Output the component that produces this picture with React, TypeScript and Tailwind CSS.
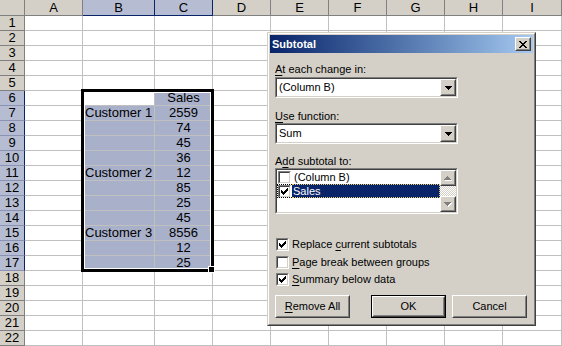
import React from 'react';

const COLS = [
  { k: 'A', w: 'w-[58px]' },
  { k: 'B', w: 'w-[72px]' },
  { k: 'C', w: 'w-[58px]' },
  { k: 'D', w: 'w-[58px]' },
  { k: 'E', w: 'w-[58px]' },
  { k: 'F', w: 'w-[58px]' },
  { k: 'G', w: 'w-[58px]' },
  { k: 'H', w: 'w-[58px]' },
  { k: 'I', w: 'flex-1 min-w-0' },
];

const DATA: Record<number, { B?: string; C?: string }> = {
  6: { C: 'Sales' },
  7: { B: 'Customer 1', C: '2559' },
  8: { C: '74' },
  9: { C: '45' },
  10: { C: '36' },
  11: { B: 'Customer 2', C: '12' },
  12: { C: '85' },
  13: { C: '25' },
  14: { C: '45' },
  15: { B: 'Customer 3', C: '8556' },
  16: { C: '12' },
  17: { C: '25' },
};

const ROWS = Array.from({ length: 22 }, (_, i) => i + 1);

function shaded(r: number, k: string) {
  return (k === 'B' && r >= 7 && r <= 17) || (k === 'C' && r >= 6 && r <= 17);
}

function Check() {
  const px: [number, number, number][] = [
    [6, 0, 1],
    [5, 1, 2],
    [0, 2, 1],
    [4, 2, 3],
    [0, 3, 2],
    [3, 3, 3],
    [0, 4, 5],
    [1, 5, 3],
    [2, 6, 1],
  ];
  return (
    <svg width="7" height="7" viewBox="0 0 7 7" shapeRendering="crispEdges">
      {px.map(([x, y, w], i) => (
        <rect key={i} x={x} y={y} width={w} height={1} fill="#000" />
      ))}
    </svg>
  );
}

function CheckBox({ checked }: { checked: boolean }) {
  return (
    <div className="w-[13px] h-[13px] shrink-0 border border-t-[#808080] border-l-[#808080] border-r-white border-b-white">
      <div className="w-full h-full border border-t-[#404040] border-l-[#404040] border-r-[#D4D0C8] border-b-[#D4D0C8] bg-white flex items-center justify-center">
        {checked ? <Check /> : null}
      </div>
    </div>
  );
}

function DownArrow({ color = '#000' }: { color?: string }) {
  return (
    <svg width="7" height="4" viewBox="0 0 7 4" shapeRendering="crispEdges">
      <rect x="0" y="0" width="7" height="1" fill={color} />
      <rect x="1" y="1" width="5" height="1" fill={color} />
      <rect x="2" y="2" width="3" height="1" fill={color} />
      <rect x="3" y="3" width="1" height="1" fill={color} />
    </svg>
  );
}

function DisabledArrow({ up }: { up: boolean }) {
  const rows = up
    ? [
        [3, 0, 1],
        [2, 1, 3],
        [1, 2, 5],
        [0, 3, 7],
      ]
    : [
        [0, 0, 7],
        [1, 1, 5],
        [2, 2, 3],
        [3, 3, 1],
      ];
  return (
    <svg width="8" height="5" viewBox="0 0 8 5" shapeRendering="crispEdges">
      {rows.map(([x, y, w], i) => (
        <rect key={'s' + i} x={x + 1} y={y + 1} width={w} height={1} fill="#fff" />
      ))}
      {rows.map(([x, y, w], i) => (
        <rect key={'g' + i} x={x} y={y} width={w} height={1} fill="#808080" />
      ))}
    </svg>
  );
}

function CloseGlyph() {
  const px: [number, number, number][] = [
    [0, 0, 2],
    [6, 0, 2],
    [1, 1, 2],
    [5, 1, 2],
    [2, 2, 4],
    [3, 3, 2],
    [2, 4, 4],
    [1, 5, 2],
    [5, 5, 2],
    [0, 6, 2],
    [6, 6, 2],
  ];
  return (
    <svg width="8" height="7" viewBox="0 0 8 7" shapeRendering="crispEdges">
      {px.map(([x, y, w], i) => (
        <rect key={i} x={x} y={y} width={w} height={1} fill="#000" />
      ))}
    </svg>
  );
}

function Raised({ className, children }: { className: string; children?: React.ReactNode }) {
  return (
    <div className={`shrink-0 border border-t-white border-l-white border-r-[#404040] border-b-[#404040] ${className}`}>
      <div className="w-full h-full border border-t-[#D4D0C8] border-l-[#D4D0C8] border-r-[#808080] border-b-[#808080] bg-[#D4D0C8] flex items-center justify-center">
        {children}
      </div>
    </div>
  );
}

function Combo({ value }: { value: string }) {
  return (
    <div className="w-[183px] h-[21px] border border-t-[#808080] border-l-[#808080] border-r-white border-b-white">
      <div className="w-full h-full border border-t-[#404040] border-l-[#404040] border-r-[#D4D0C8] border-b-[#D4D0C8] bg-white flex">
        <div className="flex-1 flex items-center pl-[2px] text-[11px] leading-[13px]">{value}</div>
        <Raised className="w-[16px] h-full">
          <DownArrow />
        </Raised>
      </div>
    </div>
  );
}

function Label({ children, className = '' }: { children: React.ReactNode; className?: string }) {
  return <div className={`text-[11px] leading-[13px] h-[13px] ${className}`}>{children}</div>;
}

function Btn({ children, def = false }: { children: React.ReactNode; def?: boolean }) {
  if (def) {
    return (
      <div className="w-[75px] h-[23px] border border-black shrink-0">
        <Raised className="w-full h-full">
          <span className="text-[11px] leading-[13px]">{children}</span>
        </Raised>
      </div>
    );
  }
  return (
    <Raised className="w-[75px] h-[23px]">
      <span className="text-[11px] leading-[13px]">{children}</span>
    </Raised>
  );
}

function Dialog() {
  return (
    <div className="absolute left-[267px] top-[32px] w-[269px] h-[294px] border border-t-[#D4D0C8] border-l-[#D4D0C8] border-r-[#404040] border-b-[#404040]">
      <div className="w-full h-full border border-t-white border-l-white border-r-[#808080] border-b-[#808080] bg-[#D4D0C8] p-[1px] flex flex-col">
        <div className="h-[18px] shrink-0 bg-linear-to-r from-[#0A246A] to-[#A6CAF0] flex items-center pl-[2px] pr-[2px]">
          <span className="flex-1 text-white font-bold text-[11px] leading-[13px]">Subtotal</span>
          <Raised className="w-[16px] h-[14px]">
            <CloseGlyph />
          </Raised>
        </div>
        <div className="flex flex-col pl-[5px]">
          <Label className="mt-[10px]">
            <span className="underline underline-offset-[2px]">A</span>t each change in:
          </Label>
          <div className="mt-[1px]">
            <Combo value="(Column B)" />
          </div>
          <Label className="mt-[12px]">
            <span className="underline underline-offset-[2px]">U</span>se function:
          </Label>
          <div className="mt-0">
            <Combo value="Sum" />
          </div>
          <Label className="mt-[11px]">
            A<span className="underline underline-offset-[2px]">d</span>d subtotal to:
          </Label>
          <div className="w-[183px] h-[46px] border border-t-[#808080] border-l-[#808080] border-r-white border-b-white">
            <div className="w-full h-full border border-t-[#404040] border-l-[#404040] border-r-[#D4D0C8] border-b-[#D4D0C8] bg-white flex">
              <div className="flex-1 flex flex-col text-[11px] leading-[13px]">
                <div className="h-[14px] flex items-center">
                  <div className="w-[15px] flex pl-[1px]">
                    <CheckBox checked={false} />
                  </div>
                  <span className="pl-[2px]">(Column B)</span>
                </div>
                <div className="relative h-[14px] flex items-stretch">
                  <div className="w-[15px] flex items-center pl-[1px]">
                    <CheckBox checked={true} />
                  </div>
                  <div className="flex-1 bg-[#0A246A] text-white flex items-center pl-[1px]">Sales</div>
                  <div className="absolute left-0 top-0 bottom-0 w-[15px] border-t border-b border-l border-dotted border-black pointer-events-none" />
                  <div className="absolute left-[15px] right-0 top-0 bottom-0 border-t border-b border-r border-dotted border-[#E8D070] pointer-events-none" />
                </div>
              </div>
              <div className="w-[16px] h-full flex flex-col">
                <Raised className="w-[16px] h-[16px]">
                  <DisabledArrow up={true} />
                </Raised>
                <div className="flex-1 bg-[repeating-conic-gradient(#D4D0C8_0%_25%,#ffffff_0%_50%)] bg-[length:2px_2px]" />
                <Raised className="w-[16px] h-[16px]">
                  <DisabledArrow up={false} />
                </Raised>
              </div>
            </div>
          </div>
          <div className="mt-[22px] flex flex-col text-[11px] leading-[13px]">
            <div className="h-[17px] flex items-center pl-[1px]">
              <CheckBox checked={true} />
              <span className="ml-[3px]">
                Replace <span className="underline underline-offset-[2px]">c</span>urrent subtotals
              </span>
            </div>
            <div className="h-[18px] flex items-center pl-[1px]">
              <CheckBox checked={false} />
              <span className="ml-[3px]">
                <span className="underline underline-offset-[2px]">P</span>age break between groups
              </span>
            </div>
            <div className="h-[17px] flex items-center pl-[1px]">
              <CheckBox checked={true} />
              <span className="ml-[3px]">
                <span className="underline underline-offset-[2px]">S</span>ummary below data
              </span>
            </div>
          </div>
          <div className="mt-[7px] flex">
            <Btn>
              <span className="underline underline-offset-[2px]">R</span>emove All
            </Btn>
            <div className="ml-[21px]">
              <Btn def>OK</Btn>
            </div>
            <div className="ml-[6px]">
              <Btn>Cancel</Btn>
            </div>
          </div>
        </div>
      </div>
    </div>
  );
}

export default function App() {
  return (
    <div className="relative w-[562px] h-[346px] overflow-hidden bg-white text-black font-['Liberation_Sans',Arial,sans-serif]">
      <div className="flex flex-col">
        <div className="h-[16px] flex text-[13px] leading-[14px]">
          <div className="w-[25px] shrink-0 h-full bg-[#D4D0C8] border-r border-b border-[#808080]" />
          {COLS.map((c) => {
            const hl = c.k === 'B' || c.k === 'C';
            return (
              <div
                key={c.k}
                className={`${c.w} shrink-0 h-full flex items-center justify-center border-r border-b ${
                  hl ? 'bg-[#B6BDD2] border-[#0A246A]' : 'bg-[#D4D0C8] border-[#808080]'
                }`}
              >
                {c.k}
              </div>
            );
          })}
        </div>
        {ROWS.map((r) => {
          const hl = r >= 6 && r <= 17;
          return (
            <div key={r} className="h-[15px] flex text-[13px] leading-[14px]">
              <div
                className={`w-[25px] shrink-0 h-full flex items-center justify-center border-b border-r ${
                  hl ? 'bg-[#B6BDD2] border-b-[#8A93B4] border-r-[#0A246A]' : 'bg-[#D4D0C8] border-[#808080]'
                }`}
              >
                {r}
              </div>
              {COLS.map((c) => {
                const s = shaded(r, c.k);
                const d = DATA[r];
                const txt = d ? (c.k === 'B' ? d.B : c.k === 'C' ? d.C : undefined) : undefined;
                return (
                  <div
                    key={c.k}
                    className={`${c.w} shrink-0 h-full flex items-center border-r border-b border-[#C0C0C0] whitespace-nowrap ${
                      s ? 'bg-[#A9B0CA]' : 'bg-white'
                    } ${c.k === 'C' ? 'justify-center' : 'pl-[2px]'}`}
                  >
                    {txt}
                  </div>
                );
              })}
            </div>
          );
        })}
      </div>
      <div className="absolute left-[81px] top-[89px] w-[133px] h-[183px] border-[3px] border-black shadow-[inset_0_0_0_1px_#ffffff] pointer-events-none" />
      <div className="absolute left-[208px] top-[266px] w-[7px] h-[7px] bg-black border border-white pointer-events-none" />
      <Dialog />
    </div>
  );
}
